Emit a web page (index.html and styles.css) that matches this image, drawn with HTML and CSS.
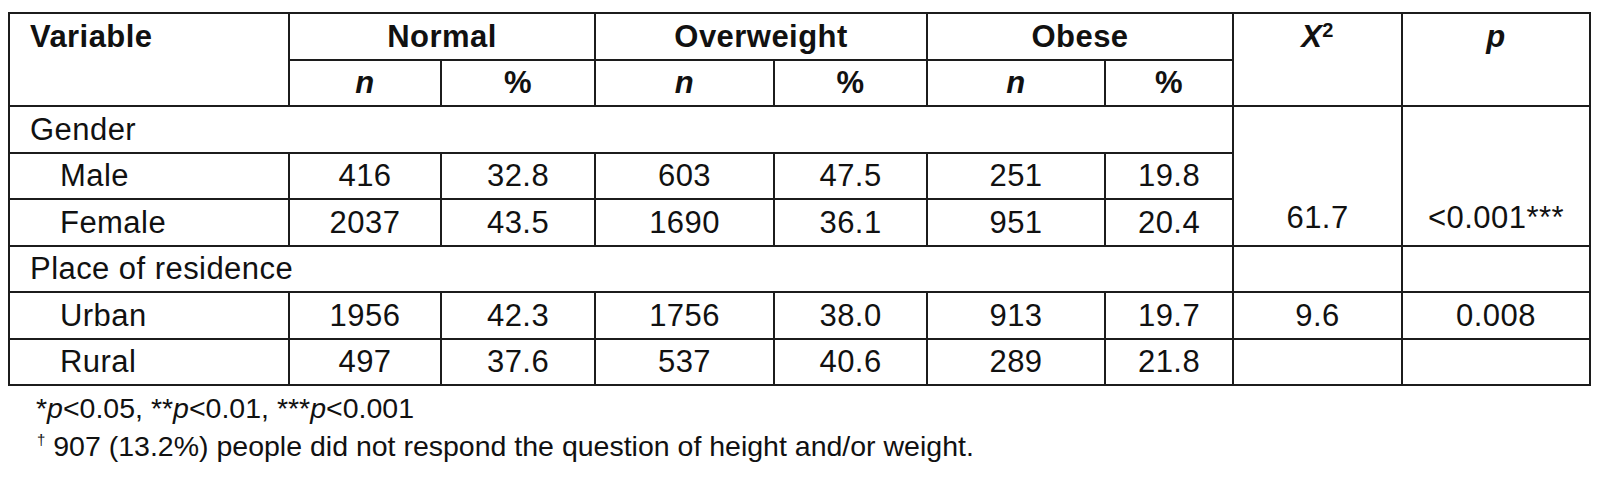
FILE: index.html
```html
<!DOCTYPE html>
<html>
    <head>
        <link rel="stylesheet" href="styles.css">
    </head>
    <body>
        <table class="data">
            <colgroup>
                <col class="c-var">
                <col class="c-n1"><col class="c-p1">
                <col class="c-n2"><col class="c-p2">
                <col class="c-n3"><col class="c-p3">
                <col class="c-chi">
                <col class="c-pv">
            </colgroup>
            <thead>
                <tr>
                    <th rowspan="2" class="head-var">Variable</th>
                    <th colspan="2">Normal</th>
                    <th colspan="2">Overweight</th>
                    <th colspan="2">Obese</th>
                    <th rowspan="2" class="head-stat"><i>X</i><sup>2</sup></th>
                    <th rowspan="2" class="head-stat"><i>p</i></th>
                </tr>
                <tr>
                    <th><i>n</i></th><th>%</th>
                    <th><i>n</i></th><th>%</th>
                    <th><i>n</i></th><th>%</th>
                </tr>
            </thead>
            <tbody>
                <tr>
                    <td colspan="7" class="group">Gender</td>
                    <td rowspan="3" class="test">61.7</td>
                    <td rowspan="3" class="test">&lt;0.001***</td>
                </tr>
                <tr>
                    <td class="level">Male</td>
                    <td>416</td><td>32.8</td>
                    <td>603</td><td>47.5</td>
                    <td>251</td><td>19.8</td>
                </tr>
                <tr>
                    <td class="level">Female</td>
                    <td>2037</td><td>43.5</td>
                    <td>1690</td><td>36.1</td>
                    <td>951</td><td>20.4</td>
                </tr>
                <tr>
                    <td colspan="7" class="group">Place of residence</td>
                    <td></td>
                    <td></td>
                </tr>
                <tr>
                    <td class="level">Urban</td>
                    <td>1956</td><td>42.3</td>
                    <td>1756</td><td>38.0</td>
                    <td>913</td><td>19.7</td>
                    <td>9.6</td>
                    <td>0.008</td>
                </tr>
                <tr>
                    <td class="level">Rural</td>
                    <td>497</td><td>37.6</td>
                    <td>537</td><td>40.6</td>
                    <td>289</td><td>21.8</td>
                    <td></td>
                    <td></td>
                </tr>
            </tbody>
        </table>

        <div class="notes">
            <p>*<i>p</i>&lt;0.05, **<i>p</i>&lt;0.01, ***<i>p</i>&lt;0.001</p>
            <p class="dagger"><sup>†</sup> 907 (13.2%) people did not respond the question of height and/or weight.</p>
        </div>
    </body>
</html>
```

FILE: styles.css
```css
/* PAGE */
body {
    margin: 12px 8px 0;
    background: #fff;
    color: #111;
    font-family: "Liberation Sans", Arial, sans-serif;
}

/* TABLE */
.data {
    border-collapse: collapse;
    table-layout: fixed;
    width: 1583px;
    font-size: 31px;
    letter-spacing: 0.45px;
}

.data th,
.data td {
    border: 2px solid #1c1c1c;
    padding: 0;
    height: 44.5px;
    line-height: 35px;
    text-align: center;
    vertical-align: middle;
}

.data th {
    font-weight: bold;
}

.data .head-var {
    text-align: left;
    vertical-align: top;
    padding: 5px 0 0 20px;
}

.data .head-stat {
    vertical-align: top;
    padding-top: 5px;
}

.data sup {
    font-size: 20px;
    font-style: normal;
    vertical-align: 10px;
    line-height: 0;
}

.data .group {
    text-align: left;
    padding-left: 20px;
}

.data .level {
    text-align: left;
    padding-left: 50px;
}

.data .test {
    vertical-align: bottom;
    padding-bottom: 10px;
}

.c-var { width: 280px; }
.c-n1 { width: 152px; }
.c-p1 { width: 154px; }
.c-n2 { width: 179px; }
.c-p2 { width: 153px; }
.c-n3 { width: 178px; }
.c-p3 { width: 128px; }
.c-chi { width: 169px; }
.c-pv { width: 188px; }

/* FOOTNOTES */
.notes {
    margin-top: 3px;
    padding-left: 28px;
    font-size: 28.5px;
    line-height: 38px;
}

.notes p {
    margin: 0;
}

.notes .dagger {
    padding-left: 1px;
}

.notes sup {
    font-size: 15px;
    vertical-align: 11px;
    line-height: 0;
}
```
